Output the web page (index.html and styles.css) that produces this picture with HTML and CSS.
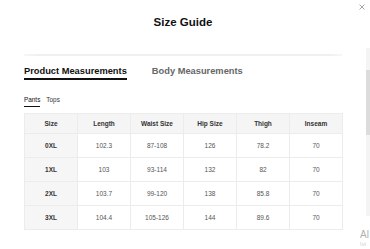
FILE: index.html
```html
<!DOCTYPE html>
<html>
<head>
<meta charset="utf-8">
<link rel="stylesheet" href="styles.css">
</head>
<body>
<div class="page">
  <div class="modal">
    <h1 class="title">Size Guide</h1>
    <div class="divider"></div>
    <div class="tabs">
      <span class="tab active">Product Measurements</span>
      <span class="tab">Body Measurements</span>
    </div>
    <div class="subtabs">
      <span class="subtab active">Pants</span>
      <span class="subtab">Tops</span>
    </div>
    <table class="sizes">
      <thead>
        <tr><th>Size</th><th>Length</th><th>Waist Size</th><th>Hip Size</th><th>Thigh</th><th>Inseam</th></tr>
      </thead>
      <tbody>
        <tr><th>0XL</th><td>102.3</td><td>87-108</td><td>126</td><td>78.2</td><td>70</td></tr>
        <tr><th>1XL</th><td>103</td><td>93-114</td><td>132</td><td>82</td><td>70</td></tr>
        <tr><th>2XL</th><td>103.7</td><td>99-120</td><td>138</td><td>85.8</td><td>70</td></tr>
        <tr><th>3XL</th><td>104.4</td><td>105-126</td><td>144</td><td>89.6</td><td>70</td></tr>
      </tbody>
    </table>
  </div>
  <div class="side">
    <div class="scrollbar"><div class="thumb"></div></div>
    <div class="side-text">Al<span class="side-small">Ivi</span></div>
  </div>
  <button class="close" aria-label="Close">
    <svg width="6" height="6" viewBox="0 0 6 6"><path d="M0.5 0.5 L5.5 5.5 M5.5 0.5 L0.5 5.5" stroke="#9a9a9a" stroke-width="0.9" fill="none"/></svg>
  </button>
</div>
</body>
</html>
```

FILE: styles.css
```css
* { box-sizing: border-box; }
html, body {
  margin: 0;
  padding: 0;
  background: #fff;
  width: 370px;
  height: 249px;
  overflow: hidden;
}
body {
  font-family: "Liberation Sans", Arial, sans-serif;
  color: #222;
  -webkit-font-smoothing: antialiased;
}
.page {
  position: relative;
  display: flex;
  width: 370px;
  height: 249px;
  opacity: 0.999;
}
.modal {
  width: 360px;
  flex: none;
  padding: 15px 0 0 24px;
}
.title {
  margin: 0;
  width: 318px;
  text-align: center;
  font-size: 11.5px;
  line-height: 14px;
  font-weight: 700;
  color: #111;
}
.divider {
  margin-top: 25px;
  width: 318px;
  height: 2px;
  background: linear-gradient(to right, #f7f7f7, #f0f0f0 4%, #f0f0f0 96%, #f7f7f7);
}
.tabs {
  margin-top: 10px;
  display: flex;
  gap: 25px;
}
.tab {
  font-size: 9.3px;
  line-height: 11px;
  font-weight: 700;
  color: #666;
  padding-bottom: 1px;
  border-bottom: 2px solid transparent;
}
.tab.active {
  color: #111;
  border-bottom-color: #111;
}
.subtabs {
  margin-top: 16px;
  display: flex;
  gap: 6px;
}
.subtab {
  font-size: 6.4px;
  line-height: 8px;
  color: #333;
  padding-bottom: 2px;
  border-bottom: 1.5px solid transparent;
}
.subtab.active {
  color: #111;
  border-bottom-color: #111;
}
.sizes {
  margin-top: 5.5px;
  width: 318px;
  border-collapse: collapse;
  table-layout: fixed;
  font-size: 6.5px;
}
.sizes th, .sizes td {
  width: 53px;
  text-align: center;
  border: 1px solid #ececec;
  padding: 0;
}
.sizes thead th {
  height: 20px;
  background: #f5f5f5;
  font-weight: 700;
  color: #333;
}
.sizes tbody tr {
  height: 24px;
}
.sizes tbody th {
  background: #f6f6f6;
  font-weight: 700;
  color: #333;
}
.sizes tbody td {
  color: #555;
  background: #fff;
}
.side {
  flex: 1;
  display: flex;
  flex-direction: column;
  padding-top: 48px;
}
.scrollbar {
  margin-left: 6px;
  width: 4px;
  height: 168px;
  background: #f4f4f4;
  padding-top: 22px;
}
.thumb {
  width: 4px;
  height: 65px;
  background: #dcdcdc;
}
.side-text {
  margin-top: 14px;
  font-size: 10px;
  line-height: 10px;
  color: #b0b0b0;
  white-space: nowrap;
  display: flex;
  flex-direction: column;
}
.side-small {
  font-size: 6px;
  line-height: 8px;
  color: #d0d0d0;
}
.close {
  position: absolute;
  left: 358px;
  top: 3px;
  width: 8px;
  height: 8px;
  padding: 1px;
  border: 0;
  background: transparent;
  display: flex;
}
```
